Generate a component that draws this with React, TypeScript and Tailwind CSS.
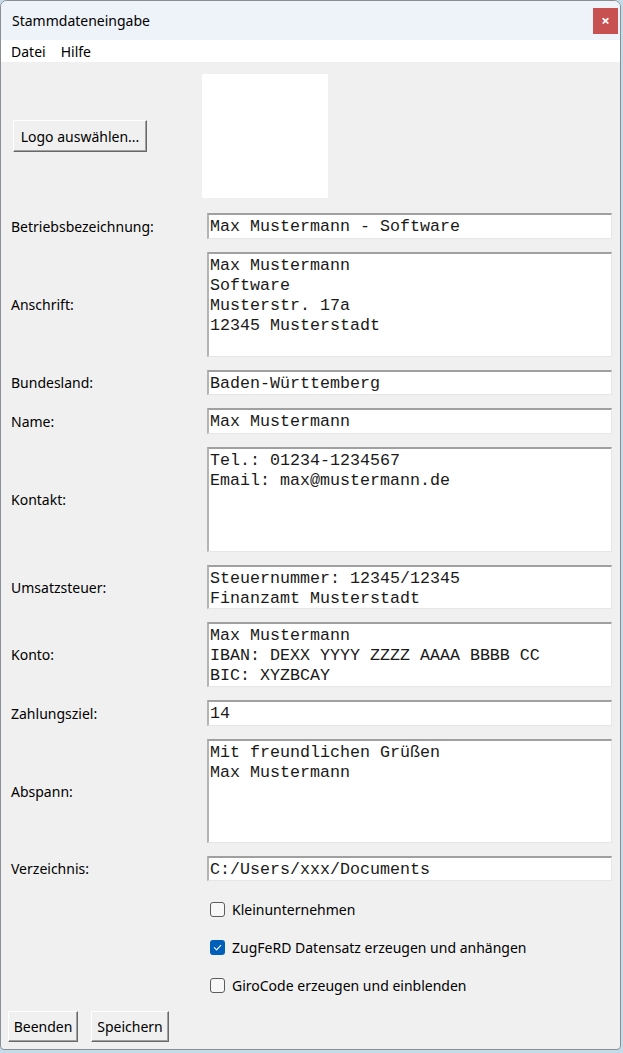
import React from "react";

const fieldCls =
  "bg-white border-t-2 border-l-2 border-r border-b border-t-[#a0a0a0] border-l-[#b4b4b4] border-r-[#e6e6e6] border-b-[#e6e6e6] pl-[1px] pt-[2px] font-['Liberation_Mono',monospace] text-[16.67px] leading-[20px] text-[#1a1a1a] whitespace-pre overflow-hidden";

const btnCls =
  "bg-[#f0f0f0] border border-t-white border-l-white border-r-[#696969] border-b-[#696969] shadow-[inset_-1px_-1px_0_#a0a0a0] text-[14px] text-black flex items-center justify-center";

type Row = { label: string; lines: string[]; h: number };

const rows: Row[] = [
  { label: "Betriebsbezeichnung:", lines: ["Max Mustermann - Software"], h: 26 },
  { label: "Anschrift:", lines: ["Max Mustermann", "Software", "Musterstr. 17a", "12345 Musterstadt"], h: 105 },
  { label: "Bundesland:", lines: ["Baden-Württemberg"], h: 25 },
  { label: "Name:", lines: ["Max Mustermann"], h: 26 },
  { label: "Kontakt:", lines: ["Tel.: 01234-1234567", "Email: max@mustermann.de"], h: 105 },
  { label: "Umsatzsteuer:", lines: ["Steuernummer: 12345/12345", "Finanzamt Musterstadt"], h: 44 },
  { label: "Konto:", lines: ["Max Mustermann", "IBAN: DEXX YYYY ZZZZ AAAA BBBB CC", "BIC: XYZBCAY"], h: 65 },
  { label: "Zahlungsziel:", lines: ["14"], h: 26 },
  { label: "Abspann:", lines: ["Mit freundlichen Grüßen", "Max Mustermann"], h: 104 },
  { label: "Verzeichnis:", lines: ["C:/Users/xxx/Documents"], h: 25 },
];

function Check({ checked, label }: { checked?: boolean; label: string }) {
  return (
    <div className="flex items-center h-[20px]">
      {checked ? (
        <div className="w-[15px] h-[15px] rounded-[3px] bg-[#005fb8] flex items-center justify-center">
          <svg width="9" height="9" viewBox="0 0 10 10" fill="none">
            <path d="M1.5 5.2 L4 7.6 L8.6 2.6" stroke="white" strokeWidth="1.2" strokeLinecap="round" strokeLinejoin="round" />
          </svg>
        </div>
      ) : (
        <div className="w-[15px] h-[15px] rounded-[3px] border border-[#5c5c5c] bg-[#f7f7f7]" />
      )}
      <span className="ml-[7px] text-[14px] text-black">{label}</span>
    </div>
  );
}

export default function App() {
  return (
    <div className="w-[623px] h-[1053px] bg-[#c4dbe9] font-['Noto_Sans',sans-serif]">
      <div className="w-[621px] h-[1050px] bg-[#f0f0f0] border border-[#8a8f96] rounded-t-[7px] rounded-b-[4px] flex flex-col overflow-hidden">
        {/* title bar */}
        <div className="h-[39px] bg-[#eef3fa] flex items-center justify-between pl-[11px] pr-[2px]">
          <span className="text-[14px] text-black">Stammdateneingabe</span>
          <div className="w-[25px] h-[26px] bg-[#c75050] flex items-center justify-center text-white text-[15px] font-bold">
            ×
          </div>
        </div>
        {/* menu */}
        <div className="h-[22px] bg-white flex items-center gap-[15px] pl-[10px] text-[14px] text-black">
          <span>Datei</span>
          <span>Hilfe</span>
        </div>
        {/* body */}
        <div className="flex flex-col pl-[10px] pr-[8px] pt-[12px]">
          <div className="flex items-center">
            <div className="w-[191px] flex items-center pl-[2px]">
              <button className={btnCls + " w-[134px] h-[32px]"}>Logo auswählen...</button>
            </div>
            <div className="w-[126px] h-[124px] bg-white" />
          </div>
          <div className="flex flex-col gap-[13px] mt-[15px]">
            {rows.map((r) => (
              <div key={r.label} className="flex items-center">
                <div className="w-[196px] text-[14px] text-black">{r.label}</div>
                <div className={fieldCls + " flex-1"} style={{ height: r.h }}>
                  {r.lines.join("\n")}
                </div>
              </div>
            ))}
          </div>
          <div className="flex flex-col gap-[18px] pl-[199px] mt-[18px]">
            <Check label="Kleinunternehmen" />
            <Check checked label="ZugFeRD Datensatz erzeugen und anhängen" />
            <Check label="GiroCode erzeugen und einblenden" />
          </div>
          <div className="flex gap-[13px] mt-[16px] -ml-[3px]">
            <button className={btnCls + " w-[70px] h-[31px]"}>Beenden</button>
            <button className={btnCls + " w-[78px] h-[31px]"}>Speichern</button>
          </div>
        </div>
      </div>
    </div>
  );
}
